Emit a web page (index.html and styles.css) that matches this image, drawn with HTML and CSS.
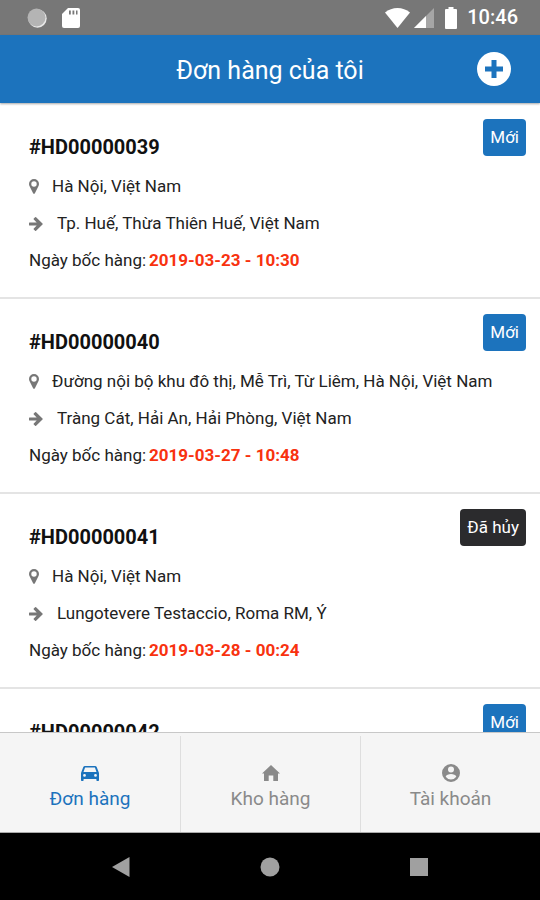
FILE: index.html
```html
<!DOCTYPE html>
<html lang="vi">
<head>
<meta charset="utf-8">
<meta name="viewport" content="width=device-width, initial-scale=1">
<title>Đơn hàng của tôi</title>
<link rel="stylesheet" href="styles.css">
</head>
<body>
<svg class="sprite" aria-hidden="true">
  <symbol id="pin" viewBox="0 0 10 15"><path fill-rule="evenodd" d="M5 0a5 5 0 0 1 5 5c0 1-.3 1.700-.6 2.300L5.900 14.300a1 1 0 0 1-1.800 0L.6 7.300C.3 6.700 0 6 0 5a5 5 0 0 1 5-5zm0 2.300a2.700 2.700 0 1 0 0 5.400 2.700 2.700 0 0 0 0-5.400z"/></symbol>
  <symbol id="arrow" viewBox="0 0 14 14"><path d="M.5 5.400h7.200L4.800 2.500a.7.700 0 0 1 0-1L6.100.3a.7.700 0 0 1 1 0l6.400 6.200a.7.700 0 0 1 0 1L7.100 13.700a.7.700 0 0 1-1 0l-1.300-1.200a.7.700 0 0 1 0-1l2.900-2.900H.5a.5.500 0 0 1-.5-.5V5.900a.5.500 0 0 1 .5-.5z"/></symbol>
</svg>
<div class="status">
  <div class="status-group status-left">
    <svg width="20" height="20" viewBox="0 0 20 20"><circle cx="10.500" cy="10.500" r="9.200" fill="#e8e8e8"/><circle cx="9.500" cy="9.500" r="9" fill="#b4b4b4"/></svg>
    <svg width="18" height="20" viewBox="0 0 18 20"><path fill="#fff" d="M6 0h10a2 2 0 0 1 2 2v16a2 2 0 0 1-2 2H2a2 2 0 0 1-2-2V6z"/><path fill="#777" d="M7 2.500h1.800v4H7zM10.500 2.500h1.800v4h-1.800zM14 2.500h1.500v4H14z"/></svg>
  </div>
  <div class="status-group status-right">
    <svg width="25" height="20" viewBox="0 0 25 20"><path fill="#fff" d="M0 4.500C7-1.500 18-1.500 25 4.500L12.500 20z"/></svg>
    <svg width="20" height="20" viewBox="0 0 20 20"><path fill="#a6a6a6" d="M20 0v20H0z"/><path fill="#fff" d="M12 8v12H0z"/></svg>
    <svg class="battery" width="12" height="22" viewBox="0 0 12 22"><path fill="#fff" d="M3.500 0h5v2H11a1 1 0 0 1 1 1v18a1 1 0 0 1-1 1H1a1 1 0 0 1-1-1V3a1 1 0 0 1 1-1h2.500z"/></svg>
    <span class="clock">10:46</span>
  </div>
</div>
<header class="header">
  <h1>Đơn hàng của tôi</h1>
  <button class="add" type="button" aria-label="Thêm đơn hàng">
    <svg width="34" height="34" viewBox="0 0 34 34"><circle cx="17" cy="17" r="17" fill="#fff"/><path fill="#1c73bd" d="M14.500 8h5v6.500H26v5h-6.500V26h-5v-6.500H8v-5h6.500z"/></svg>
  </button>
</header>
<main class="orders">
  <article class="order">
    <h2>#HD00000039</h2><span class="badge">Mới</span>
    <p class="from"><svg class="pin"><use href="#pin"/></svg>Hà Nội, Việt Nam</p>
    <p class="to"><svg class="arrow"><use href="#arrow"/></svg>Tp. Huế, Thừa Thiên Huế, Việt Nam</p>
    <p>Ngày bốc hàng: <time>2019-03-23 - 10:30</time></p>
  </article>
  <article class="order">
    <h2>#HD00000040</h2><span class="badge">Mới</span>
    <p class="from"><svg class="pin"><use href="#pin"/></svg>Đường nội bộ khu đô thị, Mễ Trì, Từ Liêm, Hà Nội, Việt Nam</p>
    <p class="to"><svg class="arrow"><use href="#arrow"/></svg>Tràng Cát, Hải An, Hải Phòng, Việt Nam</p>
    <p>Ngày bốc hàng: <time>2019-03-27 - 10:48</time></p>
  </article>
  <article class="order">
    <h2>#HD00000041</h2><span class="badge cancelled">Đã hủy</span>
    <p class="from"><svg class="pin"><use href="#pin"/></svg>Hà Nội, Việt Nam</p>
    <p class="to"><svg class="arrow"><use href="#arrow"/></svg>Lungotevere Testaccio, Roma RM, Ý</p>
    <p>Ngày bốc hàng: <time>2019-03-28 - 00:24</time></p>
  </article>
  <article class="order">
    <h2>#HD00000042</h2><span class="badge">Mới</span>
  </article>
</main>
<nav class="tabs">
  <a class="tab active" href="#orders" aria-current="page">
    <svg width="18" height="18" viewBox="0 0 18 18"><path fill-rule="evenodd" d="M4 2h10c.9 0 1.500.4 1.800 1.200L18 9v7.300c0 .5-.3.700-.7.700h-1.200c-.4 0-.7-.3-.7-.7V15H2.600v1.300c0 .4-.3.700-.7.700H.7c-.4 0-.7-.2-.7-.7V9l2.200-5.800C2.500 2.400 3.100 2 4 2zm.1 1.500L2.500 8h13l-1.600-4.500zM3.500 10a1.400 1.400 0 1 0 0 2.800 1.400 1.400 0 0 0 0-2.800zm11 0a1.400 1.400 0 1 0 0 2.800 1.400 1.400 0 0 0 0-2.800z"/></svg>
    <span>Đơn hàng</span>
  </a>
  <a class="tab" href="#warehouse">
    <svg width="18" height="18" viewBox="0 0 18 18"><path d="M9 1l9 8.500h-2V17h-4.700v-5.500H6.700V17H2V9.500H0z"/></svg>
    <span>Kho hàng</span>
  </a>
  <a class="tab" href="#account">
    <svg width="18" height="18" viewBox="0 0 18 18"><path fill-rule="evenodd" d="M9 0a9 9 0 1 1 0 18A9 9 0 0 1 9 0zm0 2.500a3 3 0 1 0 0 6 3 3 0 0 0 0-6zm0 7.500c-2.300 0-5 1-5.300 2.700a6.500 6.500 0 0 0 10.600 0C14 11 11.300 10 9 10z"/></svg>
    <span>Tài khoản</span>
  </a>
</nav>
<div class="system">
  <button type="button" aria-label="Quay lại"><svg width="20" height="20" viewBox="0 0 20 20"><path d="M18.500 0v20L1 10z"/></svg></button>
  <button type="button" aria-label="Màn hình chính"><svg width="20" height="20" viewBox="0 0 20 20"><circle cx="10" cy="10" r="9.500"/></svg></button>
  <button type="button" aria-label="Ứng dụng gần đây"><svg width="20" height="20" viewBox="0 0 20 20"><path d="M1 1h18v18H1z"/></svg></button>
</div>
</body>
</html>
```
FILE: styles.css
```css
* {
  box-sizing: border-box;
}

body {
  display: flex;
  flex-direction: column;
  height: 100vh;
  margin: 0;
  background: #fff;
  color: #222;
  font-family: Roboto, "Liberation Sans", sans-serif;
  font-size: 17px;
}

h1,
h2,
p {
  margin: 0;
}

button {
  padding: 0;
  border: 0;
  background: none;
}

svg {
  display: block;
  flex: none;
}

.sprite {
  position: absolute;
  width: 0;
  height: 0;
}

.status {
  display: flex;
  flex: none;
  justify-content: space-between;
  padding: 0 22px 0 27px;
  background: #777;
}

.status-group {
  display: flex;
  align-items: center;
  height: 35px;
}

.status-left {
  gap: 15px;
}

.status-right {
  gap: 4px;
}

.battery {
  margin: 0 6px 0 7px;
}

.clock {
  color: #fff;
  font-size: 20px;
  font-weight: 500;
  line-height: 35px;
}

.header {
  display: grid;
  grid-template-columns: 1fr auto 1fr;
  flex: none;
  align-items: center;
  height: 68px;
  margin-bottom: 1px;
  padding: 0 29px;
  background: #1c73bd;
  box-shadow: 0 1px 2px rgba(0, 0, 0, 0.35);
  z-index: 1;
}

.header h1 {
  grid-column: 2;
  padding-top: 4px;
  color: #fff;
  font-size: 25px;
  font-weight: 400;
  line-height: 32px;
}

.add {
  justify-self: end;
}

.orders {
  flex: 1;
  min-height: 0;
  overflow: hidden;
}

.order {
  position: relative;
  padding: 31px 28px 18px 29px;
  border-bottom: 2px solid #e4e4e4;
}

.order h2 {
  margin-bottom: 9px;
  color: #111;
  font-size: 20px;
  font-weight: 700;
  line-height: 24px;
}

.order p {
  display: flex;
  align-items: center;
  gap: 3px;
  line-height: 37px;
}

.order .from {
  gap: 13px;
}

.order .to {
  gap: 14px;
}

.pin {
  width: 10px;
  height: 15px;
  fill: #777;
}

.arrow {
  width: 14px;
  height: 14px;
  fill: #777;
}

.order time {
  color: #f8320f;
  font-weight: 700;
}

.badge {
  position: absolute;
  top: 15px;
  right: 14px;
  padding: 0 7px;
  border-radius: 4px;
  background: #1c73bd;
  color: #fff;
  line-height: 37px;
}

.badge.cancelled {
  background: #2b2b2d;
}

.tabs {
  display: grid;
  grid-template-columns: repeat(3, 1fr);
  flex: none;
  height: 101px;
  padding-top: 3px;
  border-top: 1px solid #c8c8c8;
  border-bottom: 1px solid #aaa;
  background: #f5f5f5;
}

.tab {
  display: flex;
  flex-direction: column;
  align-items: center;
  padding-top: 28px;
  color: #8a8a8a;
  fill: currentColor;
  font-size: 19px;
  line-height: 34px;
  text-decoration: none;
}

.tab + .tab {
  border-left: 1px solid #dedede;
}

.tab.active {
  color: #1c73bd;
}

.system {
  display: flex;
  flex: none;
  justify-content: center;
  gap: 21px;
  height: 67px;
  background: #000;
  fill: #a0a0a0;
}

.system button {
  width: 128px;
  display: grid;
  place-items: center;
}
```
